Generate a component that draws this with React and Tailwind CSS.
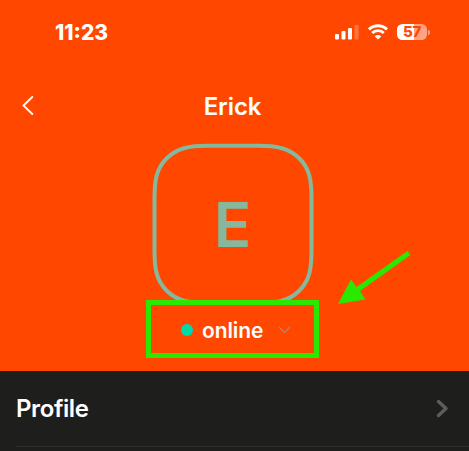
function SignalIcon() {
    return (
        <svg width="24" height="16" viewBox="0 0 24 16" fill="#fff">
            <rect x="0" y="10" width="4" height="5.5" rx="1" />
            <rect x="6.5" y="7" width="4" height="8.5" rx="1" />
            <rect x="13" y="4" width="4" height="11.5" rx="1" />
            <rect x="19.5" y="1" width="4" height="14.5" rx="1" opacity="0.25" />
        </svg>
    );
}

function WifiIcon() {
    return (
        <svg width="20" height="16" viewBox="0 0 20 16" fill="none" stroke="#fff" strokeWidth="2.9">
            <path d="M1 5.4a12.9 12.9 0 0 1 18 0" />
            <path d="M4.2 9a8.2 8.2 0 0 1 11.6 0" />
            <path d="M10 15.6l-3.2-3.2a4.6 4.6 0 0 1 6.4 0z" fill="#fff" stroke="none" />
        </svg>
    );
}

function BatteryIcon({ level }) {
    return (
        <div className="flex items-center gap-px">
            <div className="flex h-4 w-[30px] items-center justify-center rounded-[5.5px] bg-[linear-gradient(90deg,#fff_57%,#ffa382_57%)] text-[15px] leading-4 font-extrabold tracking-[-0.3px] text-[#ff4700]">
                {level}
            </div>
            <div className="h-[5px] w-[2px] rounded-r-full bg-[#ffa382]" />
        </div>
    );
}

function StatusBar() {
    return (
        <div className="flex h-[64px] items-center justify-between pr-[39px] pl-[55px] text-white">
            <span className="pt-px text-[21px] leading-6 font-extrabold">11:23</span>
            <div className="flex items-center">
                <SignalIcon />
                <div className="ml-[9px]"><WifiIcon /></div>
                <div className="ml-[9px]"><BatteryIcon level={57} /></div>
            </div>
        </div>
    );
}

function Avatar({ letter }) {
    return (
        <div className="relative mx-auto mt-[13px] flex h-[162px] w-[162px] items-center justify-center">
            <svg className="absolute inset-0" width="162" height="162" viewBox="0 0 162 162" fill="none" stroke="#85b89d" strokeWidth="4">
                <path d="M2.5 56C2.5 38 4 26 14.5 15.5C25 5 37 2.8 56 2.8H106C125 2.8 137 5 147.5 15.5C158 26 159.5 38 159.5 56V107C159.5 125 158 137 147.5 147.5C137 158 125 160 106 160H56C37 160 25 158 14.5 147.5C4 137 2.5 125 2.5 107Z" />
            </svg>
            <span className="pt-px text-[62px] leading-none font-semibold text-[#85b89d]">{letter}</span>
        </div>
    );
}

// Annotation arrow that points at the status selector
function Arrow() {
    return (
        <svg className="absolute top-[250px] left-[336px]" width="78" height="58" viewBox="336 250 78 58">
            <path d="M338 304L351 279.5L356.5 287L407.5 251L410.5 255L360 291L365.5 299.5Z" fill="#2ae800" />
        </svg>
    );
}

export default function App() {
    return (
        <div className="relative h-[451px] w-[469px] overflow-hidden bg-[#1e1e1c] font-['Inter',sans-serif]">
            <header className="h-[371px] bg-[#ff4700]">
                <StatusBar />
                <div className="grid h-[66px] grid-cols-[60px_1fr_60px] items-center pt-[17px] pr-[4px]">
                    <svg className="ml-[22px]" width="12" height="20" viewBox="0 0 12 20" fill="none" stroke="#fff" strokeWidth="1.9" strokeLinecap="round">
                        <path d="M10.3 1L1.5 9.5l8.8 8.5" />
                    </svg>
                    <h1 className="pt-[2px] text-center text-[24px] leading-8 font-[560] tracking-[-0.1px] text-white">Erick</h1>
                </div>
                <div className="w-[465px]">
                    <Avatar letter="E" />
                </div>
                <div className="relative -mt-[5px] ml-[146px] flex h-[58px] w-[173px] items-center border-5 border-[#2ae800] pt-[2px] pl-[30px]">
                    <span className="h-3 w-3 rounded-full bg-[#00d9a8]" />
                    <span className="ml-[9px] pt-px text-[21px] leading-6 font-[560] tracking-[-0.1px] text-white">online</span>
                    <svg className="ml-[15px]" width="13" height="8" viewBox="0 0 13 8" fill="none" stroke="#b87f66" strokeWidth="1.5">
                        <path d="M1 1l5.5 5.5L12 1" />
                    </svg>
                </div>
            </header>

            <div className="ml-4 flex h-[76px] items-center justify-between border-b border-[#2d2d2b] pr-[20px]">
                <span className="text-[24px] leading-8 font-[560] tracking-[-0.4px] text-white">Profile</span>
                <svg width="13" height="19" viewBox="0 0 13 19" fill="none" stroke="#5d5d5c" strokeWidth="3.4" strokeLinecap="round" strokeLinejoin="round">
                    <path d="M2.5 2.5l7.5 7-7.5 7" />
                </svg>
            </div>

            <Arrow />
        </div>
    );
}
